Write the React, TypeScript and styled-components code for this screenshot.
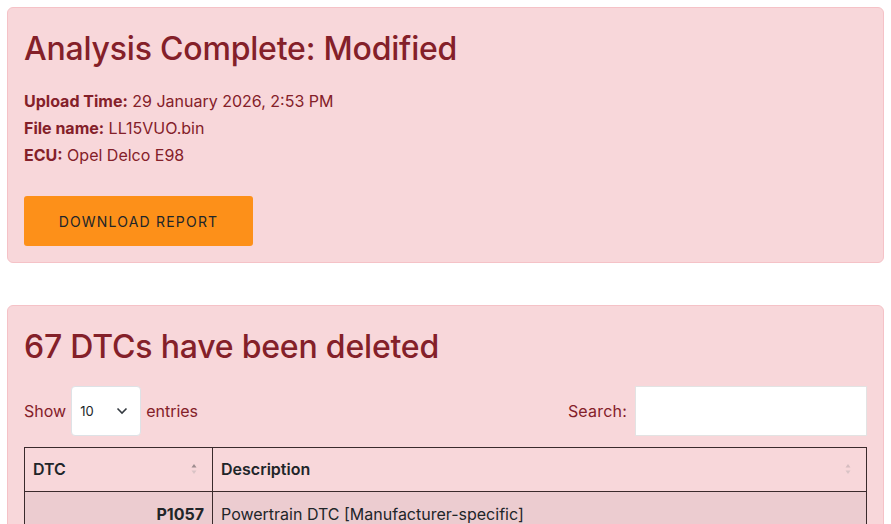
import React from "react";
import styled, { createGlobalStyle } from "styled-components";

const Global = createGlobalStyle`
  html, body { margin: 0; padding: 0; background: #fff; }
  body { font-family: Inter, "Noto Sans", sans-serif; color: #842029; }
  * { box-sizing: border-box; }
`;

const Page = styled.div`
  padding: 7px 7px 0 7px;
  display: flex;
  flex-direction: column;
  gap: 42px;
`;

const Card = styled.section`
  background: #f8d7da;
  border: 1px solid #f5c2c7;
  border-radius: 6px;
  padding: 16px;
  color: #842029;
`;

const Title = styled.h2`
  margin: 6px 0 0 0;
  font-family: Inter, sans-serif;
  font-size: 32px;
  font-weight: 500;
  line-height: 1.2;
  letter-spacing: -0.2px;
  color: #842029;
`;

const InfoList = styled.div`
  margin-top: 20px;
  display: flex;
  flex-direction: column;
  font-size: 16px;
  line-height: 27px;
`;

const Label = styled.b`
  font-weight: 700;
`;

const Button = styled.button`
  display: block;
  margin-top: 27px;
  width: 229px;
  height: 50px;
  background: #fd9019;
  border: none;
  border-radius: 3px;
  font-family: Inter, sans-serif;
  font-size: 14px;
  letter-spacing: 1.2px;
  color: #212529;
  cursor: pointer;
`;

const Controls = styled.div`
  margin-top: 19px;
  display: flex;
  justify-content: space-between;
  align-items: center;
  font-size: 16px;
`;

const Group = styled.label`
  display: flex;
  align-items: center;
  gap: 5px;
`;

const SearchLabel = styled.span`
  letter-spacing: 0.2px;
`;

const SelectBox = styled.div`
  width: 70px;
  height: 50px;
  background: #fff;
  border: 1px solid #dee2e6;
  border-radius: 4px;
  display: flex;
  align-items: center;
  justify-content: space-between;
  padding: 0 12px 0 8px;
  font-size: 13px;
  color: #212529;
`;

const SearchInput = styled.input`
  width: 232px;
  height: 50px;
  background: #fff;
  border: 1px solid #e3e3e3;
  margin-left: 3px;
`;

const Table = styled.table`
  margin-top: 11px;
  width: 100%;
  border-collapse: collapse;
  font-size: 16px;
  color: #212529;
`;

const Th = styled.th<{ $w?: string }>`
  width: ${(p) => p.$w || "auto"};
  height: 44px;
  border: 1px solid #3a2a2c;
  text-align: left;
  padding: 0 8px;
  font-weight: 600;
  position: relative;
`;

const Sort = styled.span`
  position: absolute;
  right: 15px;
  top: 50%;
  transform: translateY(-50%);
  display: flex;
`;

const Td = styled.td<{ $right?: boolean; $bold?: boolean }>`
  height: 44px;
  background: #ecccd0;
  border-left: 1px solid #3a2a2c;
  border-right: 1px solid #3a2a2c;
  padding: 0 8px;
  text-align: ${(p) => (p.$right ? "right" : "left")};
  font-weight: ${(p) => (p.$bold ? 700 : 400)};
  vertical-align: middle;
`;

const Chevron = () => (
  <svg width="12" height="8" viewBox="0 0 12 8">
    <path d="M1.5 1.5 L6 6 L10.5 1.5" fill="none" stroke="#343a40" strokeWidth="1.6" />
  </svg>
);

const SortIcon = ({ active }: { active?: boolean }) => (
  <svg width="6" height="12" viewBox="0 0 6 12">
    <path d="M0.5 4.5 L3 1 L5.5 4.5 Z" fill={active ? "#9d8b8e" : "#d6bcc0"} />
    <path d="M0.5 7.5 L3 11 L5.5 7.5 Z" fill="#d9c3c6" />
  </svg>
);

export default function App() {
  return (
    <>
      <Global />
      <Page>
        <Card>
          <Title>Analysis Complete: Modified</Title>
          <InfoList>
            <div><Label>Upload Time:</Label> 29 January 2026, 2:53 PM</div>
            <div><Label>File name:</Label> LL15VUO.bin</div>
            <div><Label>ECU:</Label> Opel Delco E98</div>
          </InfoList>
          <Button>DOWNLOAD REPORT</Button>
        </Card>
        <Card>
          <Title>67 DTCs have been deleted</Title>
          <Controls>
            <Group>
              Show
              <SelectBox>
                <span>10</span>
                <Chevron />
              </SelectBox>
              entries
            </Group>
            <Group>
              <SearchLabel>Search:</SearchLabel>
              <SearchInput type="text" />
            </Group>
          </Controls>
          <Table>
            <thead>
              <tr>
                <Th $w="188px">DTC<Sort><SortIcon active /></Sort></Th>
                <Th>Description<Sort><SortIcon /></Sort></Th>
              </tr>
            </thead>
            <tbody>
              <tr>
                <Td $right $bold>P1057</Td>
                <Td>Powertrain DTC [Manufacturer-specific]</Td>
              </tr>
            </tbody>
          </Table>
        </Card>
      </Page>
    </>
  );
}
